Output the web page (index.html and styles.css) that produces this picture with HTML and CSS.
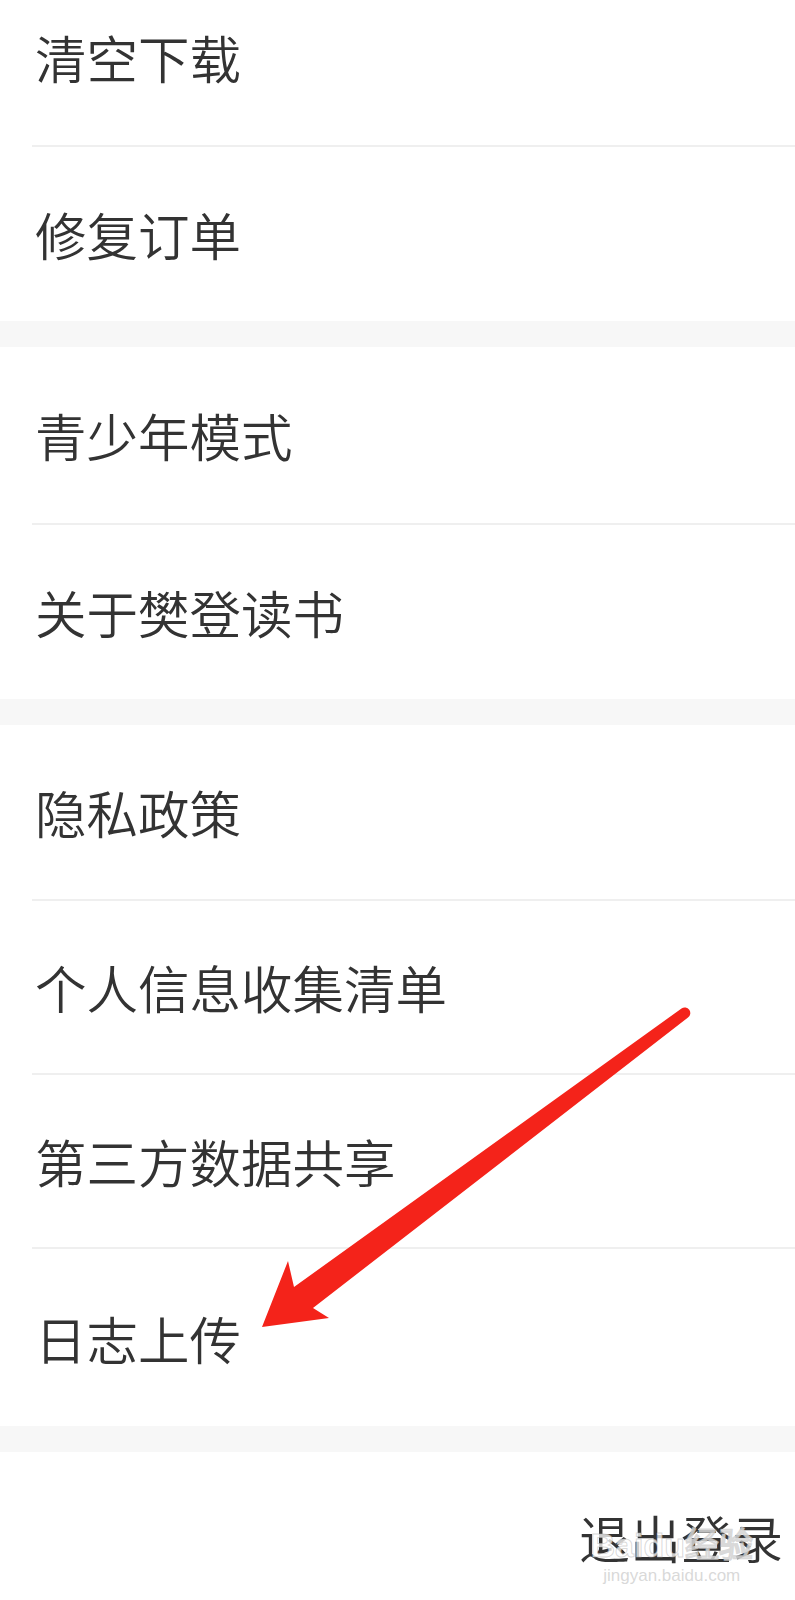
FILE: index.html
```html
<!DOCTYPE html>
<html lang="zh-CN">
<head>
    <meta charset="UTF-8">
    <meta name="viewport" content="width=device-width, initial-scale=1.0">
    <title>设置</title>
    <link rel="stylesheet" href="styles.css">
</head>
<body>
    <main class="page">
        <!-- 缓存 / 订单 -->
        <section class="group">
            <div class="item">清空下载</div>
            <div class="item">修复订单</div>
        </section>

        <!-- 模式 / 关于 -->
        <section class="group">
            <div class="item">青少年模式</div>
            <div class="item">关于樊登读书</div>
        </section>

        <!-- 隐私 -->
        <section class="group group--privacy">
            <div class="item">隐私政策</div>
            <div class="item">个人信息收集清单</div>
            <div class="item">第三方数据共享</div>
            <div class="item item--last">日志上传</div>
        </section>

        <div class="logout">
            <span class="logout__btn">退出登录</span>
            <span class="mark">
                <span class="mark__logo">Bai<span class="mark__du">du</span>经验</span>
                <span class="mark__url">jingyan.baidu.com</span>
            </span>
        </div>
    </main>

    <!-- annotation arrow -->
    <svg class="arrow" width="795" height="1600" viewBox="0 0 795 1600">
        <path d="M262 1327 L288 1261 L294 1287 L681.5 1008.5 A5.5 5.5 0 0 1 688 1017.5 L313 1308 L329 1318 Z" fill="#f4231a"/>
    </svg>
</body>
</html>
```

FILE: styles.css
```css
* {box-sizing: border-box;}
html, body {margin: 0; background: #fff;}
body {
    font-family: "Noto Sans CJK SC", "Noto Sans", sans-serif;
    color: #333; position: relative; overflow: hidden; height: 1600px;
}

.page {margin-top: -31px;}

.group {background: #fff;}
.group + .group {border-top: 26px solid #f7f7f7;}

.item {
    height: 176px; margin-left: 32px; padding-left: 3px;
    display: flex; align-items: center;
    font-size: 51.5px; font-weight: 350; line-height: 1;
}
.item + .item {border-top: 2px solid #efefef;}
.group--privacy .item {height: 174px;}
.group--privacy .item--last {height: 179px;}

.logout {
    border-top: 26px solid #f7f7f7;
    display: flex; justify-content: flex-end;
    padding: 60px 12px 0 0; position: relative; height: 240px;
}
.logout__btn {font-size: 51px; font-weight: 350; line-height: 1;}

.mark {
    position: absolute; right: 42px; top: 76px;
    display: flex; flex-direction: column; align-items: center;
    color: rgba(255, 255, 255, .75); pointer-events: none;
}
.mark__logo {
    font-family: "Liberation Sans", sans-serif; font-size: 34px; font-weight: bold;
    -webkit-text-stroke: 1px rgba(170, 170, 170, .45); line-height: 1;
}
.mark__url {
    font-family: "Liberation Sans", sans-serif; font-size: 17px;
    color: rgba(200, 200, 200, .7); margin-top: 4px;
}

.arrow {position: absolute; left: 0; top: 0; pointer-events: none;}
```
